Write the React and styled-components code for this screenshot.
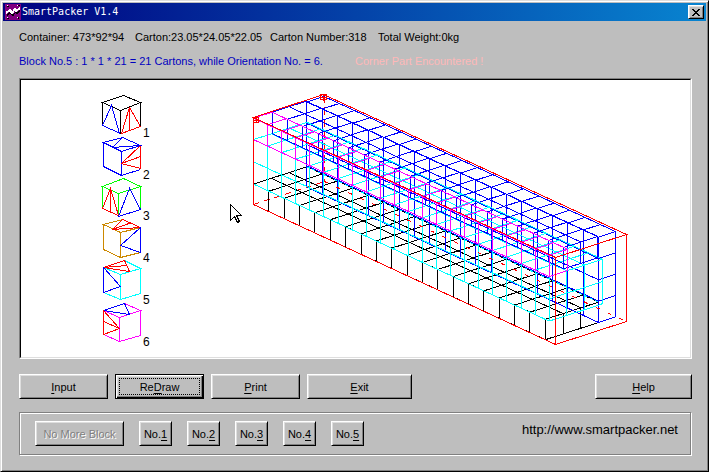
import React from "react";
import styled, { createGlobalStyle, css } from "styled-components";

const GlobalStyle = createGlobalStyle`
  html, body { margin: 0; background: #bebebe; }
  * { box-sizing: border-box; }
`;

const FACE = "#bebebe";
const UI_FONT = '"Liberation Sans", Arial, sans-serif';

const raised = css`
  border: 1px solid;
  border-color: #fff #000 #000 #fff;
  box-shadow: inset 1px 1px 0 #dedede, inset -1px -1px 0 #808080;
`;

const Window = styled.main`
  display: flex;
  flex-direction: column;
  min-height: 100vh;
  padding: 2px;
  background: ${FACE};
  border: 1px solid;
  border-color: #dedede #000 #000 #dedede;
  box-shadow: inset 1px 1px 0 #fff, inset -1px -1px 0 #808080;
  font: 11px/24px ${UI_FONT};
  color: #000;
`;

const TitleBar = styled.header`
  display: flex;
  align-items: center;
  height: 18px;
  padding: 0 2px;
  background: linear-gradient(90deg, #000080, #0884d0);
`;

const Title = styled.h1`
  flex: 1;
  margin: 0 0 0 1px;
  color: #fff;
  font: 10px/18px "DejaVu Sans Mono", monospace;
`;

const CloseButton = styled.button`
  display: grid;
  place-items: center;
  width: 16px;
  height: 14px;
  padding: 0;
  background: ${FACE};
  ${raised}
`;

const Content = styled.div`
  display: flex;
  flex-direction: column;
  padding: 4px 14px 14px 16px;
`;

const InfoRow = styled.div`
  display: grid;
  grid-template-columns: ${(p) => p.$columns};
  height: 24px;
  white-space: nowrap;
  color: ${(p) => p.$color || "#000"};
`;

const Warning = styled.span`
  color: #ffb8b8;
`;

const Canvas = styled.div`
  margin-top: 5px;
  background: #fff;
  border: 1px solid;
  border-color: #808080 #fff #fff #808080;
  overflow: hidden;
`;

const CanvasInner = styled.div`
  border: 1px solid;
  border-color: #000 #dedede #dedede #000;
`;

const Drawing = styled.svg`
  display: block;
`;

const Actions = styled.div`
  display: flex;
  gap: 7px;
  margin-top: 15px;
`;

const Button = styled.button`
  width: ${(p) => p.$width}px;
  height: 25px;
  padding: 0;
  background: ${FACE};
  color: #000;
  font: 11px/22px ${UI_FONT};
  white-space: nowrap;
  ${raised}
  ${(p) => p.$end && css`margin-left: auto;`}
  ${(p) => p.$focused && css`
    border-color: #000;
    box-shadow: inset 1px 1px 0 #fff, inset -1px -1px 0 #000, inset -2px -2px 0 #808080, inset 2px 2px 0 #dedede;
    outline: 1px dotted #000;
    outline-offset: -5px;
  `}
  &:disabled {
    color: #808080;
    text-shadow: 1px 1px 0 #fff;
  }
`;

const Underlined = styled.u`
  text-underline-offset: 2px;
  text-decoration-skip-ink: none;
`;

const Blocks = styled.section`
  display: flex;
  align-items: center;
  gap: 15px;
  height: 43px;
  margin: 13px 1px 0 0;
  padding: 0 12px 0 15px;
  border: 1px solid #808080;
  box-shadow: inset 1px 1px 0 #fff, 1px 1px 0 #fff;
`;

const Site = styled.a`
  margin-left: auto;
  padding-bottom: 7px;
  color: #000;
  text-decoration: none;
  font: 13px/20px "Liberation Sans", sans-serif;
`;

/* Projection of container space (473 x 92 x 94) onto the canvas. */
const project = (x, y, z) => [
  253.5 + (302 * x) / 473 + (71 * y) / 92,
  204.5 + (140 * x) / 473 - (23 * y) / 92 - (87 * z) / 94,
];
const seg = (a, b) => `M${project(...a).map((n) => n.toFixed(1))}L${project(...b).map((n) => n.toFixed(1))}`;

/* Visible faces (front, top, right end) of a block of cartons. */
function blockPath({ at, size, count }) {
  const [x0, y0, z0] = at;
  const [dx, dy, dz] = size;
  const [nx, ny, nz] = count;
  const x1 = x0 + dx * nx, y1 = y0 + dy * ny, z1 = z0 + dz * nz;
  const d = [];
  for (let i = 0; i <= nx; i++) {
    const x = x0 + i * dx;
    d.push(seg([x, y0, z0], [x, y0, z1]), seg([x, y0, z1], [x, y1, z1]));
  }
  for (let j = 0; j <= ny; j++) {
    const y = y0 + j * dy;
    d.push(seg([x0, y, z1], [x1, y, z1]), seg([x1, y, z0], [x1, y, z1]));
  }
  for (let k = 0; k <= nz; k++) {
    const z = z0 + k * dz;
    d.push(seg([x0, y0, z], [x1, y0, z]), seg([x1, y0, z], [x1, y1, z]));
  }
  return d.join("");
}

const BLOCKS = [
  { color: "#000", at: [0, 0, 0], size: [24.05, 23.05, 22.05], count: [19, 3, 1] },
  { color: "#00f", at: [0, 69.15, 0], size: [24.05, 22.05, 23.05], count: [19, 1, 4] },
  { color: "#0ff", at: [0, 0, 22.05], size: [22.05, 23.05, 24.05], count: [21, 3, 2] },
  { color: "#00f", at: [0, 24.05, 70.15], size: [24.05, 22.05, 23.05], count: [19, 2, 1] },
  { color: "#f0f", at: [0, 0, 70.15], size: [22.05, 24.05, 23.05], count: [21, 1, 1] },
];

const CUBES = [
  { y: 137, lines: [
    ["#000", "M102 102L123 95L140 102L120 110ZM102 102V125M120 110V133M140 102V126"],
    ["#00f", "M120 133L102 125L111 105L119 133"],
    ["#f00", "M121 133L129 107L140 126ZM129 107V129"]] },
  { y: 179, lines: [
    ["#00f", "M103 142L122 137L140 145L121 151ZM103 142V166L121 175V151M121 175L140 169M122 137L112 147L140 145"],
    ["#f00", "M140 145V168L121 163L140 145M121 163L140 156"]] },
  { y: 220, lines: [
    ["#0f0", "M102 186L123 178L140 186L118 193ZM102 186V208M118 193V216M140 186V209"],
    ["#f00", "M118 215L102 208L110 188L118 215M110 188V212"],
    ["#00f", "M118 216L129 188L140 209Z"]] },
  { y: 262, lines: [
    ["#c80", "M140 227L120 232L103 224L122 219M103 224V249L120 257V232M120 257L140 252"],
    ["#f00", "M122 219L140 227L112 229ZM112 229L131 222"],
    ["#00f", "M140 227V252L120 245Z"]] },
  { y: 304, lines: [
    ["#0ff", "M124 260L140 268L120 274L103 267M103 292L120 299V274M120 299L140 293V268"],
    ["#f00", "M103 267L124 260L129 271ZM103 267L127 265"],
    ["#00f", "M103 267V292L120 286Z"]] },
  { y: 346, lines: [
    ["#f0f", "M124 303L140 310L119 317L103 310M103 334L119 341V317M119 341L140 335V310"],
    ["#00f", "M103 310L124 303L129 314Z"],
    ["#f00", "M103 310V334L119 328ZM103 321L119 328"]] },
];

function PackingView() {
  return (
    <Drawing width="669" height="277" viewBox="21 80 669 277" role="img" aria-label="Container packing view">
      <g fill="none" shapeRendering="crispEdges">
        {CUBES.map((c) => c.lines.map(([color, d]) => (
          <path key={c.y + color} d={d} stroke={color} transform="translate(.5 .5)" />
        )))}
        <g stroke="#f00">
          <path d={seg([0, 92, 94], [0, 92, 0])} strokeDasharray="8 4" />
          <path d={seg([0, 0, 0], [0, 92, 0])} strokeDasharray="6 5" />
        </g>
        {BLOCKS.map((b, i) => <path key={i} d={blockPath(b)} stroke={b.color} />)}
        <path stroke="#0ff" d={seg([0, 69.15, 22.05], [463.05, 69.15, 22.05])} strokeDasharray="3 3" />
        <path stroke="#0ff" d={seg([0, 69.15, 70.15], [463.05, 69.15, 70.15])} strokeDasharray="5 2" />
        <path stroke="#f00" d={seg([0, 92, 0], [473, 92, 0])} strokeDasharray="4 9" />
        <path
          stroke="#f00"
          d="M253.5 117.5L323.5 94.5L626.5 234.5L555.5 257.5ZM253.5 117.5V204.5L555.5 344.5V257.5M555.5 344.5L626.5 321.5V234.5"
        />
        <path stroke="#f00" d="M253.5 117.5h5v5h-5zM256.5 117v6M253 120.5h6M320.5 94.5h6v5h-6zM323.5 94v7M320 97.5h7" />
      </g>
      <g fontFamily="Liberation Sans" fontSize="12">
        {CUBES.map((c, i) => <text key={c.y} x="143" y={c.y}>{i + 1}</text>)}
      </g>
      <path
        d="M230.5 204.5V220.5L234.5 216.5L237.5 222.5L239.5 221.5L236.5 215.5H241.5Z"
        fill="#fff" stroke="#000" shapeRendering="crispEdges"
      />
    </Drawing>
  );
}

function AppIcon() {
  return (
    <svg width="16" height="16" viewBox="0 0 16 16" shapeRendering="crispEdges" aria-hidden="true">
      <path fill="#800080" d="M0 0h16v16H0z" />
      <path fill="none" stroke="#000" d="M2 11.5L5 8.5L8 11.5L11 7.5L12 9.5L15 6.5" />
      <path fill="none" stroke="#fff" strokeWidth="2" d="M1 9L5 6L7 9L10 5L11 7L15 4" />
      <path fill="#000" d="M2 2h2v1H2zM13 1h2v1h-2zM2 14h2v1H2zM13 13h1v2h-1z" />
      <path fill="#fff" d="M2 1h1v1H2zM12 1h1v1h-1zM2 13h1v1H2zM12 13h1v1h-1z" />
    </svg>
  );
}

export default function App() {
  return (
    <>
      <GlobalStyle />
      <Window>
        <TitleBar>
          <AppIcon />
          <Title>SmartPacker V1.4</Title>
          <CloseButton aria-label="Close">
            <svg width="8" height="7" viewBox="0 0 8 7" shapeRendering="crispEdges" aria-hidden="true">
              <path d="M0 0h2v1H0zM6 0h2v1H6zM1 1h2v1H1zM5 1h2v1H5zM2 2h4v1H2zM3 3h2v1H3zM2 4h4v1H2zM1 5h2v1H1zM5 5h2v1H5zM0 6h2v1H0zM6 6h2v1H6z" />
            </svg>
          </CloseButton>
        </TitleBar>
        <Content>
          <InfoRow $columns="116px 135px 108px 1fr">
            <span>Container: 473*92*94</span>
            <span>Carton:23.05*24.05*22.05</span>
            <span>Carton Number:318</span>
            <span>Total Weight:0kg</span>
          </InfoRow>
          <InfoRow $columns="336px 1fr" $color="#0000c0">
            <span>Block No.5 : 1 * 1 * 21 = 21 Cartons, while Orientation No. = 6.</span>
            <Warning>Corner Part Encountered !</Warning>
          </InfoRow>
          <Canvas>
            <CanvasInner>
              <PackingView />
            </CanvasInner>
          </Canvas>
          <Actions>
            <Button $width={89}><Underlined>I</Underlined>nput</Button>
            <Button $width={89} $focused>Re<Underlined>D</Underlined>raw</Button>
            <Button $width={89}><Underlined>P</Underlined>rint</Button>
            <Button $width={105}><Underlined>E</Underlined>xit</Button>
            <Button $width={97} $end><Underlined>H</Underlined>elp</Button>
          </Actions>
          <Blocks aria-label="Blocks">
            <Button $width={89} disabled>No More Block</Button>
            {[1, 2, 3, 4, 5].map((n) => (
              <Button key={n} $width={33}>No.<Underlined>{n}</Underlined></Button>
            ))}
            <Site href="http://www.smartpacker.net">http://www.smartpacker.net</Site>
          </Blocks>
        </Content>
      </Window>
    </>
  );
}
